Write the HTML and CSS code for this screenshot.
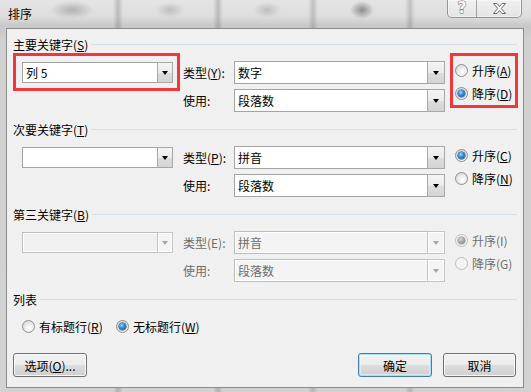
FILE: index.html
```html
<!DOCTYPE html>
<html lang="zh-CN">
<head>
<meta charset="utf-8">
<title>排序</title>
<link rel="stylesheet" href="styles.css">
</head>
<body>
<div class="window">
  <div class="titlebar">
    <span class="title">排序</span>
    <div class="caption">
      <span class="cbtn help">?</span>
      <span class="cbtn close">
        <svg width="15" height="11" viewBox="0 0 15 11"><path d="M1.5 0.5h3.5l2.5 3 2.5-3h3.5l-4.2 5 4.2 5h-3.5l-2.5-3-2.5 3h-3.5l4.2-5z" fill="#f8f8f8" stroke="#6a6a6a" stroke-width="1" stroke-linejoin="round"/></svg>
      </span>
    </div>
  </div>

  <div class="client">
    <section class="group">
      <div class="legend"><span>主要关键字(<u>S</u>)</span><i class="rule"></i></div>
      <div class="grid">
        <div class="keycell">
          <div class="mark mark-key">
            <div class="combo key"><span class="val">列 5</span><span class="drop"><i class="arrow"></i></span></div>
          </div>
        </div>
        <span class="lbl">类型(<u>Y</u>):</span>
        <div class="combo wide"><span class="val">数字</span><span class="drop"><i class="arrow"></i></span></div>
        <div class="radios">
          <div class="mark mark-order">
            <div class="radio"><i class="dot"></i><span>升序(<u>A</u>)</span></div>
            <div class="radio on"><i class="dot"></i><span>降序(<u>D</u>)</span></div>
          </div>
        </div>
        <span class="lbl">使用:</span>
        <div class="combo wide"><span class="val">段落数</span><span class="drop"><i class="arrow"></i></span></div>
      </div>
    </section>

    <section class="group">
      <div class="legend"><span>次要关键字(<u>T</u>)</span><i class="rule"></i></div>
      <div class="grid">
        <div class="keycell">
          <div class="combo key plain"><span class="val"></span><span class="drop"><i class="arrow"></i></span></div>
        </div>
        <span class="lbl">类型(<u>P</u>):</span>
        <div class="combo wide"><span class="val">拼音</span><span class="drop"><i class="arrow"></i></span></div>
        <div class="radios pad">
          <div class="radio on"><i class="dot"></i><span>升序(<u>C</u>)</span></div>
          <div class="radio"><i class="dot"></i><span>降序(<u>N</u>)</span></div>
        </div>
        <span class="lbl">使用:</span>
        <div class="combo wide"><span class="val">段落数</span><span class="drop"><i class="arrow"></i></span></div>
      </div>
    </section>

    <section class="group">
      <div class="legend"><span>第三关键字(<u>B</u>)</span><i class="rule"></i></div>
      <div class="grid disabled">
        <div class="keycell">
          <div class="combo key plain"><span class="val"></span><span class="drop"><i class="arrow"></i></span></div>
        </div>
        <span class="lbl">类型(E):</span>
        <div class="combo wide"><span class="val">拼音</span><span class="drop"><i class="arrow"></i></span></div>
        <div class="radios pad">
          <div class="radio on"><i class="dot"></i><span>升序(I)</span></div>
          <div class="radio"><i class="dot"></i><span>降序(G)</span></div>
        </div>
        <span class="lbl">使用:</span>
        <div class="combo wide"><span class="val">段落数</span><span class="drop"><i class="arrow"></i></span></div>
      </div>
    </section>

    <section class="group last">
      <div class="legend"><span>列表</span><i class="rule short"></i></div>
      <div class="radiorow">
        <div class="radio first"><i class="dot"></i><span>有标题行(<u>R</u>)</span></div>
        <div class="radio on"><i class="dot"></i><span>无标题行(<u>W</u>)</span></div>
      </div>
    </section>

    <div class="buttons">
      <button class="btn opt">选项(<u>O</u>)...</button>
      <button class="btn ok">确定</button>
      <button class="btn cancel">取消</button>
    </div>
  </div>
</div>
</body>
</html>
```

FILE: styles.css
```css
* { box-sizing: border-box; margin: 0; padding: 0; }
html, body { width: 531px; height: 392px; overflow: hidden; }
body {
  font-family: "Noto Sans CJK SC", "Microsoft YaHei", sans-serif;
  font-size: 12px;
  color: #000;
  background: #cfcfcf;
}
u { text-decoration: underline; text-underline-offset: 1px; }

.window {
  width: 531px;
  height: 392px;
  display: flex;
  flex-direction: column;
  padding: 0 7px 4px 6px;
  background:
    radial-gradient(ellipse 22px 9px at 72px 10px, rgba(70,70,70,.30), transparent),
    radial-gradient(ellipse 14px 8px at 170px 10px, rgba(70,70,70,.22), transparent),
    radial-gradient(ellipse 14px 8px at 267px 10px, rgba(70,70,70,.22), transparent),
    radial-gradient(ellipse 12px 9px at 362px 10px, rgba(40,40,40,.45), transparent),
    linear-gradient(90deg, transparent 113px, rgba(90,90,90,.28) 118px, transparent 123px,
      transparent 213px, rgba(90,90,90,.28) 218px, transparent 223px,
      transparent 308px, rgba(90,90,90,.25) 313px, transparent 318px,
      transparent 405px, rgba(90,90,90,.25) 410px, transparent 415px),
    linear-gradient(180deg, #e4e4e4 0, #dedede 16px, #c8c8c8 26px, #d0d0d0 40px, #d2d2d2 100%);
}

.titlebar {
  height: 28px;
  flex: none;
  display: flex;
  justify-content: space-between;
  align-items: flex-start;
  padding-left: 2px;
}
.title { line-height: 28px; font-size: 12px; }
.caption {
  display: flex;
  height: 18px;
  margin-right: 2px;
  border: 1px solid rgba(90,90,90,.6);
  border-top: none;
  border-radius: 0 0 5px 5px;
  background: linear-gradient(180deg, rgba(255,255,255,.45), rgba(255,255,255,.2));
  box-shadow: inset 0 0 0 1px rgba(255,255,255,.45);
}
.cbtn {
  display: flex;
  align-items: center;
  justify-content: center;
  height: 17px;
}
.help {
  width: 28px;
  font-family: "DejaVu Sans", sans-serif;
  font-weight: bold;
  font-size: 15px;
  line-height: 17px;
  color: #fafafa;
  -webkit-text-stroke: 1px #6a6a6a;
  paint-order: stroke fill;
}
.close {
  width: 45px;
  border-left: 1px solid rgba(90,90,90,.5);
}

.client {
  flex: 1;
  border: 1px solid #8c8c8c;
  background: #f0f0f0;
  padding: 8px 6px 10px 6px;
  display: flex;
  flex-direction: column;
}

.group { padding-bottom: 10px; }
.group.last { padding-bottom: 0; }
.legend {
  display: flex;
  height: 16px;
  line-height: 16px;
}
.rule {
  flex: 1;
  height: 1px;
  margin-top: 7px;
  margin-left: 3px;
  background: #d5dfe5;
}

.grid {
  display: grid;
  grid-template-columns: 170px 51px 211px 1fr;
  grid-template-rows: 23px 23px;
  row-gap: 5px;
  margin-top: 8px;
  align-items: start;
}
.keycell { grid-column: 1; grid-row: 1; }
.lbl { grid-column: 2; line-height: 23px; white-space: nowrap; }
.combo.wide { grid-column: 3; }
.radios { grid-column: 4; grid-row: 1 / 3; }
.radios.pad { padding: 1px 0 0 10px; }

.mark { border: 3px solid #f0383c; }
.mark-key {
  margin: -8px 0 -7px 0;
  padding: 6px 4px 5px 6px;
  width: 167px;
}
.mark-order {
  margin: -8px 0 0 5px;
  padding: 6px 0 4px 2px;
  width: 68px;
}

.combo {
  display: flex;
  background: #fff;
  border: 1px solid #a3a3a3;
}
.combo.key { width: 151px; height: 21px; }
.combo.key.plain { margin: 1px 0 0 9px; }
.combo.wide { width: 211px; height: 23px; }
.val {
  flex: 1;
  padding-left: 3px;
  line-height: 20px;
  white-space: nowrap;
  overflow: hidden;
}
.combo.wide .val { line-height: 21px; }
.drop {
  width: 16px;
  flex: none;
  display: flex;
  align-items: center;
  justify-content: center;
  border: 1px solid #a8a8a8;
  margin: -1px -1px -1px 0;
  background: linear-gradient(180deg, #f4f4f4 0, #ebebeb 50%, #dcdcdc 51%, #d4d4d4 100%);
}
.combo.wide .drop { width: 18px; }
.arrow {
  width: 0;
  height: 0;
  border-left: 3.5px solid transparent;
  border-right: 3.5px solid transparent;
  border-top: 4px solid #000;
}

.radio {
  display: flex;
  align-items: center;
  height: 16px;
  gap: 4px;
  white-space: nowrap;
}
.radios .radio + .radio { margin-top: 7px; }
.dot {
  position: relative;
  width: 13px;
  height: 13px;
  flex: none;
  border-radius: 50%;
  border: 1px solid #8f8f8f;
  background: radial-gradient(circle at 60% 65%, #ffffff 0, #ededed 40%, #cfcfcf 100%);
}
.radio.on .dot::after {
  content: "";
  position: absolute;
  left: 2px;
  top: 2px;
  width: 7px;
  height: 7px;
  border-radius: 50%;
  background: radial-gradient(circle at 40% 35%, #9fd6fb 0, #2a8ad4 45%, #0c4f8a 100%);
  box-shadow: 0 0 0 0.5px #0b3d6c;
}

.disabled { color: #6d6d6d; }
.disabled .combo { border-color: #bdbdbd; background: #f4f4f4; box-shadow: inset 0 0 0 1px #fff; }
.disabled .combo.key { background: #f0f0f0; }
.disabled .drop {
  border-color: #c4c4c4;
  background: #f4f4f4;
  box-shadow: inset 0 0 0 1px #fff;
}
.disabled .arrow { border-top-color: #a6a6a6; }
.disabled .dot { border-color: #bcbcbc; background: #f4f4f4; }
.disabled .radio.on .dot::after {
  background: radial-gradient(circle at 40% 35%, #d8d8d8 0, #9a9a9a 60%, #7c7c7c 100%);
  box-shadow: 0 0 0 0.5px #888;
}

.radiorow {
  display: flex;
  height: 16px;
  margin-top: 10px;
  padding-left: 9px;
}
.radio.first { width: 94px; }

.buttons {
  display: flex;
  margin-top: 19px;
  height: 24px;
  padding-right: 1px;
}
.btn {
  height: 24px;
  width: 74px;
  font-family: inherit;
  font-size: 12px;
  color: #000;
  border: 1px solid #707070;
  border-radius: 3px;
  background: linear-gradient(180deg, #f2f2f2 0, #ebebeb 50%, #dddddd 51%, #cfcfcf 100%);
  box-shadow: inset 0 0 0 1px rgba(255,255,255,.8);
}
.btn.ok {
  margin-left: auto;
  border-color: #3c7fb1;
  box-shadow: inset 0 0 0 1px #a8e0f8, inset 0 0 0 2px rgba(255,255,255,.4);
}
.btn.cancel { margin-left: 11px; width: 73px; }
```
